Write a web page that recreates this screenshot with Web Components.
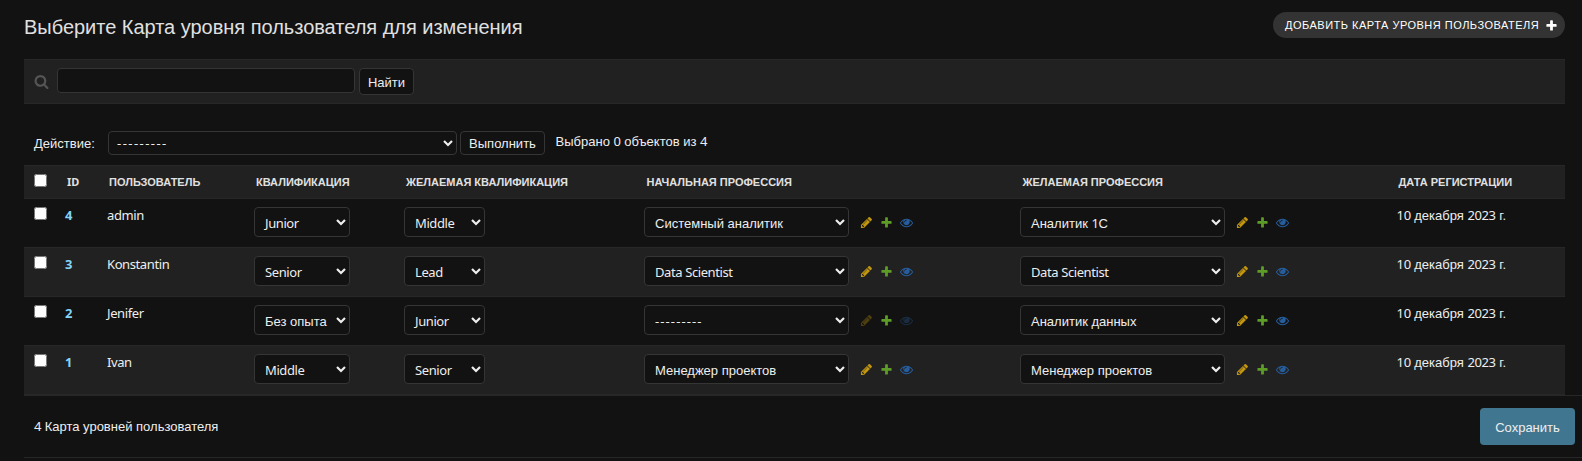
<!DOCTYPE html>
<html lang="ru">
<head>
<meta charset="utf-8">
<title>Карта уровня пользователя</title>
<style>
html,body{margin:0;background:#121212;height:461px;overflow:hidden}
body{font:13px/17px "Liberation Sans",Arial,sans-serif;color:#eee}
</style>
</head>
<body>
<change-list></change-list>
<script>
// Latin letters and digits are set in Noto Sans, Cyrillic in Liberation Sans.
class MixedText extends HTMLElement {
  connectedCallback() {
    const root = this.attachShadow({mode: 'open'});
    const text = this.getAttribute('text');
    root.innerHTML = `<style>:host{display:inline;white-space:pre}
      span{font-family:"Noto Sans",sans-serif;font-size:var(--latin-size,13px);line-height:1;letter-spacing:var(--latin-gap,-.4px)}
      .d{font-size:13px;letter-spacing:var(--dash-gap,1.1px)}</style>` +
      text.replace(/-{3,}|[A-Za-z0-9]+(?: [A-Za-z]+)*/g, m => `<span class="${m[0] === '-' ? 'd' : ''}">${m}</span>`);
  }
}
customElements.define('mixed-text', MixedText);

const ICONS = {
  search: ['#555', 'M1216 832q0-185-131.5-316.5t-316.5-131.5-316.5 131.5-131.5 316.5 131.5 316.5 316.5 131.5 316.5-131.5 131.5-316.5zm512 832q0 52-38 90t-90 38q-54 0-90-38l-343-342q-179 124-399 124-143 0-273.5-55.5t-225-150-150-225-55.5-273.5 55.5-273.5 150-225 225-150 273.5-55.5 273.5 55.5 225 150 150 225 55.5 273.5q0 220-124 399l343 343q37 37 37 90z'],
  pencil: ['#c2960e', 'M491 1536l91-91-235-235-91 91v107h128v128h107zm523-928q0-22-22-22-10 0-17 7l-542 542q-7 7-7 17 0 22 22 22 10 0 17-7l542-542q7-7 7-17zm-54-192l416 416-832 832h-416v-416zm683 96q0 53-37 90l-166 166-416-416 166-165q36-38 90-38 53 0 91 38l235 234q37 39 37 91z'],
  plus: ['#5d9d27', 'M1600 796v192q0 40-28 68t-68 28h-416v416q0 40-28 68t-68 28h-192q-40 0-68-28t-28-68v-416h-416q-40 0-68-28t-28-68v-192q0-40 28-68t68-28h416v-416q0-40 28-68t68-28h192q40 0 68 28t28 68v416h416q40 0 68 28t28 68z'],
  eye: ['#265d9d', 'M1664 960q-152-236-381-353 61 104 61 225 0 185-131.5 316.5t-316.5 131.5-316.5-131.5-131.5-316.5q0-121 61-225-229 117-381 353 133 205 333.5 326.5t434.5 121.5 434.5-121.5 333.5-326.5zm-720-384q0-20-14-34t-34-14q-125 0-214.5 89.5t-89.5 214.5q0 20 14 34t34 14 34-14 14-34q0-86 61-147t147-61q20 0 34-14t14-34zm848 384q0 34-20 69-140 230-376.5 368.5t-499.5 138.5-499.5-139-376.5-368q-20-35-20-69t20-69q140-229 376.5-368t499.5-139 499.5 139 376.5 368q20 35 20 69z']
};
class AdminIcon extends HTMLElement {
  connectedCallback() {
    const [fill, d] = ICONS[this.getAttribute('name')];
    this.attachShadow({mode: 'open'}).innerHTML = `<style>
      :host{display:block;width:13px;height:13px;flex:none}
      :host([off]){opacity:.35}
      svg{display:block;width:100%;height:100%;fill:var(--icon,${fill})}</style>
      <svg viewBox="0 0 1792 1792"><path d="${d}"/></svg>`;
  }
}
customElements.define('admin-icon', AdminIcon);

class SelectBox extends HTMLElement {
  connectedCallback() {
    this.attachShadow({mode: 'open'}).innerHTML = `<style>
      :host{display:flex;box-sizing:border-box;height:30px;flex:none;align-items:center;justify-content:space-between;
        border:1px solid #353535;border-radius:4px;background:#121212;padding:2px 3px 0 10px;white-space:nowrap}
      svg{width:10px;height:8px;flex:none;margin-top:var(--arrow-top,-2px)}</style>
      <mixed-text text="${this.getAttribute('value')}"></mixed-text>
      <svg viewBox="0 0 10 8"><path d="M1 2l4 4 4-4" fill="none" stroke="#eee" stroke-width="2.2"/></svg>`;
  }
}
customElements.define('select-box', SelectBox);

class AdminButton extends HTMLElement {
  connectedCallback() {
    this.attachShadow({mode: 'open'}).innerHTML = `<style>
      :host{display:flex;box-sizing:border-box;align-items:center;justify-content:center;flex:none;
        border:1px solid #353535;border-radius:4px;background:#121212;white-space:nowrap}
      :host([primary]){background:#417690;border:0;width:95px;height:37px;padding-top:1px}</style><slot></slot>`;
  }
}
customElements.define('admin-button', AdminButton);

class CheckBox extends HTMLElement {
  connectedCallback() {
    this.attachShadow({mode: 'open'}).innerHTML = `<style>
      :host{display:block;width:13px;height:13px}
      input{display:block;margin:0;width:13px;height:13px}</style><input type="checkbox">`;
  }
}
customElements.define('check-box', CheckBox);

class RelatedField extends HTMLElement {
  connectedCallback() {
    const v = this.getAttribute('value');
    const off = v[0] === '-' ? 'off' : '';
    this.attachShadow({mode: 'open'}).innerHTML = `<style>
      :host{display:flex;align-items:center}
      select-box{width:205px;margin-right:11px}
      admin-icon{margin:0 7px 0 0}</style>
      <select-box value="${v}"></select-box>
      <admin-icon name="pencil" ${off}></admin-icon><admin-icon name="plus"></admin-icon><admin-icon name="eye" ${off}></admin-icon>`;
  }
}
customElements.define('related-field', RelatedField);

const COLS = '31px 42px 147px 150px 240px 376px 376px 1fr';
class ResultHead extends HTMLElement {
  connectedCallback() {
    const names = ['ID', 'Пользователь', 'Квалификация', 'Желаемая квалификация', 'Начальная профессия', 'Желаемая профессия', 'Дата регистрации'];
    this.attachShadow({mode: 'open'}).innerHTML = `<style>
      :host{display:grid;grid-template-columns:${COLS};box-sizing:border-box;height:34px;padding:8px 0 0 10px;
        background:#212121;border:solid #272727;border-width:1px 0;font-weight:bold;font-size:11px;line-height:16px;
        text-transform:uppercase;color:#e0e0e0;--latin-gap:0px;--latin-size:11px}
      div{padding:0 0 0 2px;white-space:nowrap}
      div:nth-of-type(n+5){padding-left:2.5px}</style><check-box></check-box>` +
      names.map(n => `<div><mixed-text text="${n}"></mixed-text></div>`).join('');
  }
}
customElements.define('result-head', ResultHead);

class ResultRow extends HTMLElement {
  connectedCallback() {
    const a = n => this.getAttribute(n);
    this.attachShadow({mode: 'open'}).innerHTML = `<style>
      :host{display:grid;grid-template-columns:${COLS};box-sizing:border-box;
        height:49px;padding:8px 0 0 10px;border-bottom:1px solid #272727;align-items:start}
      :host(:nth-child(odd)){background:#212121}
      b{color:#81d4fa}
      .q{width:96px}.w{width:81px}
      .date{padding-left:.6px}</style>
      <check-box></check-box><b><mixed-text text="${a('num')}"></mixed-text></b><mixed-text text="${a('user')}"></mixed-text>
      <select-box class="q" value="${a('level')}"></select-box><select-box class="w" value="${a('goal')}"></select-box>
      <related-field value="${a('from')}"></related-field><related-field value="${a('to')}"></related-field>
      <mixed-text class="date" text="10 декабря 2023 г."></mixed-text>`;
  }
}
customElements.define('result-row', ResultRow);

class ChangeList extends HTMLElement {
  connectedCallback() {
    this.attachShadow({mode: 'open'}).innerHTML = `<style>
      :host{display:block;padding:12px 0 0 24px}
      header{display:flex;justify-content:space-between;align-items:flex-start;height:47px;margin-right:17px}
      h1{margin:3px 0 0;font-size:20px;line-height:24px;font-weight:400;color:#e0e0e0;letter-spacing:-.02px}
      .add{display:flex;align-items:center;gap:6px;box-sizing:border-box;width:292px;height:26px;padding-left:12px;border-radius:13px;
        background:#333;font-size:11px;letter-spacing:.5px;text-transform:uppercase;white-space:nowrap;color:#fff;--icon:#fff}
      .search{display:flex;box-sizing:border-box;height:45px;margin-right:17px;padding:8px 0 0 10px;background:#212121;border:solid #272727;border-width:1px 0}
      .search admin-icon{width:15px;height:15px;margin:6px 8px 0 0}
      .field{box-sizing:border-box;width:298px;height:25px;border:1px solid #353535;border-radius:4px;background:#121212;margin-right:4px}
      .find{width:55px;height:27px;padding-top:2px}
      .actions{display:flex;height:34px;margin-top:27px;padding-left:10px;white-space:nowrap}
      .actions .label{width:74px;padding-top:4px}
      .actions select-box{width:349px;height:24px;padding:0 3px 0 8px;margin-right:3px;--arrow-top:0px;--dash-gap:1.45px}
      .run{width:85px;height:24px;margin-right:10px}
      .count{padding:2px 0 0 .6px}
      .table{margin-right:17px;display:block;height:230px}
      footer{display:flex;box-sizing:border-box;height:63px;border:solid #272727;border-width:1px 0;padding:0 7px 0 10px;
        align-items:center;justify-content:space-between}
    </style>
    <header><h1>Выберите Карта уровня пользователя для изменения</h1>
      <div class="add">Добавить карта уровня пользователя<admin-icon name="plus"></admin-icon></div></header>
    <div class="search"><admin-icon name="search"></admin-icon><div class="field"></div><admin-button class="find">Найти</admin-button></div>
    <div class="actions"><span class="label">Действие:</span><select-box value="---------"></select-box>
      <admin-button class="run">Выполнить</admin-button><span class="count"><mixed-text text="Выбрано 0 объектов из 4"></mixed-text></span></div>
    <div class="table"><result-head></result-head>
      <result-row num="4" user="admin" level="Junior" goal="Middle" from="Системный аналитик" to="Аналитик 1С"></result-row>
      <result-row num="3" user="Konstantin" level="Senior" goal="Lead" from="Data Scientist" to="Data Scientist"></result-row>
      <result-row num="2" user="Jenifer" level="Без опыта" goal="Junior" from="---------" to="Аналитик данных"></result-row>
      <result-row num="1" user="Ivan" level="Middle" goal="Senior" from="Менеджер проектов" to="Менеджер проектов"></result-row></div>
    <footer><mixed-text text="4 Карта уровней пользователя"></mixed-text><admin-button primary>Сохранить</admin-button></footer>`;
  }
}
customElements.define('change-list', ChangeList);
</script>
</body>
</html>
